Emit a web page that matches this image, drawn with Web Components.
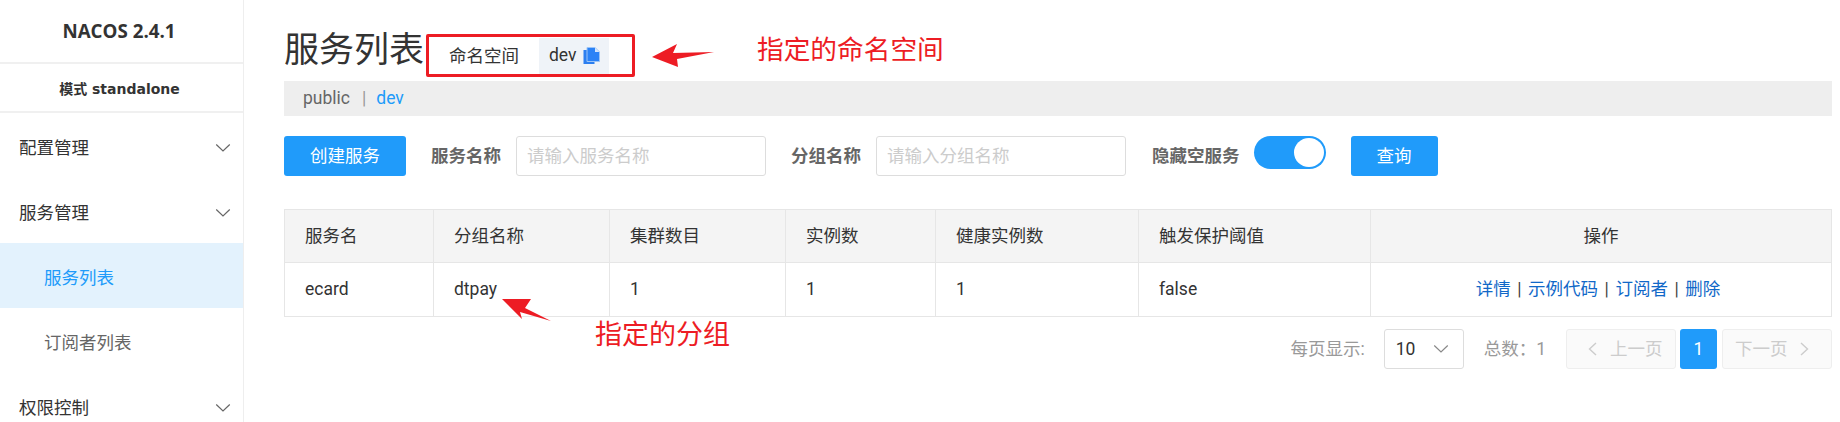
<!DOCTYPE html>
<html lang="zh">
<head>
<meta charset="utf-8">
<title>Nacos</title>
<style>
html,body{margin:0;padding:0;height:422px;overflow:hidden;background:#fff}
body{font:17.5px/1.2 Roboto,"Noto Sans CJK SC",sans-serif;color:#333}
</style>
</head>
<body>
<nacos-app>
  <nacos-sidebar slot="side" version="NACOS 2.4.1" mode="模式 standalone">
    <nav-item group label="配置管理"></nav-item>
    <nav-item group label="服务管理"></nav-item>
    <nav-item active label="服务列表"></nav-item>
    <nav-item label="订阅者列表"></nav-item>
    <nav-item group label="权限控制"></nav-item>
  </nacos-sidebar>
  <service-page></service-page>
</nacos-app>
<script>
const chevron = d => `<svg width="16" height="10" viewBox="0 0 16 10" fill="none" stroke="currentColor" stroke-width="1.2"><path d="${d}"/></svg>`;
customElements.define('nacos-app', class extends HTMLElement{
  constructor(){super();this.attachShadow({mode:'open'}).innerHTML=`<style>
  :host{display:flex;height:422px;overflow:hidden;position:relative}
  .main{flex:1;min-width:0}
  </style><slot name="side"></slot><div class="main"><slot></slot></div>`;}
});
customElements.define('nacos-sidebar', class extends HTMLElement{
  constructor(){super();this.attachShadow({mode:'open'});}
  connectedCallback(){
    this.shadowRoot.innerHTML=`<style>
    :host{display:block;width:244px;box-sizing:border-box;border-right:1px solid #eee;flex:none;height:422px;overflow:hidden}
    .v{height:60px;padding:0 5px 2px 0;border-bottom:2px solid #f0f0f0;display:flex;align-items:center;justify-content:center;font:700 18.75px "Open Sans","Noto Sans CJK SC",sans-serif;color:#333}
    .m{height:47px;padding-right:4px;border-bottom:2px solid #f0f0f0;display:flex;align-items:center;justify-content:center;font:700 14px "DejaVu Sans","Noto Sans CJK SC",sans-serif;color:#333}
    </style><div class="v">${this.getAttribute('version')}</div><div class="m">${this.getAttribute('mode')}</div><nav><slot></slot></nav>`;
  }
});
customElements.define('nav-item', class extends HTMLElement{
  constructor(){super();this.attachShadow({mode:'open'});}
  connectedCallback(){
    const g=this.hasAttribute('group');
    this.shadowRoot.innerHTML=`<style>
    :host{display:flex;align-items:center;justify-content:space-between;height:65px;box-sizing:border-box;padding:5px 12px 0 ${g?19:44}px;color:${g?'#333':'#666'}}
    :host([active]){background:#e3f2fd;color:#209bfa}
    svg{color:#666;display:block}
    </style><span>${this.getAttribute('label')}</span>${g?chevron('M1.25 1.5 L8 8 L14.75 1.5'):''}`;
  }
});
customElements.define('page-heading', class extends HTMLElement{
  constructor(){super();this.attachShadow({mode:'open'}).innerHTML=`<style>
  :host{display:flex;align-items:center;height:81px;box-sizing:border-box;padding-top:19px}
  h1{font:400 35px/1 Roboto,"Noto Sans CJK SC",sans-serif;margin:0;color:#333;width:142px;white-space:nowrap}
  .box{display:flex;align-items:stretch;width:209px;height:43.5px;box-sizing:border-box;border:3px solid #ed1c24;border-radius:2px;margin-top:11px;padding:1px 0 0 20px;color:#333}
  .ns{display:flex;align-items:center;width:90px}
  .tag{display:flex;align-items:center;gap:6px;width:70px;height:36px;background:#eff3f8;padding-left:10px;box-sizing:border-box;color:#333}
  svg{display:block;flex:none}
  </style><h1><slot></slot></h1><div class="box"><span class="ns">命名空间</span><span class="tag">dev<svg width="17" height="17" viewBox="0 0 17 17"><rect x="0.5" y="3" width="11" height="14" fill="#2c7ff0"/><path d="M4 .5H12L16.5 5V14.5H4Z" fill="#2b82f6" stroke="#9cc4f7"/><path d="M12 .5L16.5 5H12Z" fill="#d4e5fc"/></svg></span></div>`;}
});
customElements.define('ns-crumbs', class extends HTMLElement{
  constructor(){super();this.attachShadow({mode:'open'}).innerHTML=`<style>
  :host{display:flex;align-items:center;height:35px;background:#eee;padding-left:19px;color:#666;font-size:17.5px}
  i{font-style:normal;color:#999;margin:0 10px 0 12px}
  b{font-weight:400;color:#209bfa}
  </style><span>public</span><i>|</i><b>dev</b>`;}
});
customElements.define('nx-button', class extends HTMLElement{
  constructor(){super();this.attachShadow({mode:'open'}).innerHTML=`<style>
  :host{display:flex;align-items:center;justify-content:center;height:40px;background:#209bfa;color:#fff;border-radius:3px;flex:none;font-size:17.5px}
  </style><slot></slot>`;}
});
customElements.define('nx-field', class extends HTMLElement{
  constructor(){super();this.attachShadow({mode:'open'});}
  connectedCallback(){
    this.shadowRoot.innerHTML=`<style>
    :host{display:flex;align-items:center;gap:15px;flex:none}
    label{font-weight:700;color:#666;white-space:nowrap}
    .i{width:250px;height:40px;box-sizing:border-box;border:1px solid #ddd;border-radius:3px;padding-left:10px;display:flex;align-items:center;color:#ccc}
    </style><label>${this.getAttribute('label')}</label><div class="i">${this.getAttribute('placeholder')}</div>`;
  }
});
customElements.define('nx-switch', class extends HTMLElement{
  constructor(){super();this.attachShadow({mode:'open'}).innerHTML=`<style>
  :host{display:block;width:72px;height:33px;border-radius:17px;background:#209bfa;box-sizing:border-box;padding:2px 2px 2px 40px;flex:none}
  div{width:30px;height:29px;border-radius:50%;background:#fff}
  </style><div></div>`;}
});
customElements.define('filter-bar', class extends HTMLElement{
  constructor(){super();this.attachShadow({mode:'open'}).innerHTML=`<style>
  :host{display:flex;align-items:flex-start;margin-top:20px;height:40px}
  .btn1{width:122px;margin-right:25px}
  .f1{margin-right:25px}.f2{margin-right:26px}
  .l{font-weight:700;color:#666;line-height:40px;margin-right:14px;font-size:17.5px}
  .q{width:87px;margin-left:25px}
  </style>
  <nx-button class="btn1">创建服务</nx-button>
  <nx-field class="f1" label="服务名称" placeholder="请输入服务名称"></nx-field>
  <nx-field class="f2" label="分组名称" placeholder="请输入分组名称"></nx-field>
  <span class="l">隐藏空服务</span><nx-switch></nx-switch>
  <nx-button class="q">查询</nx-button>`;}
});
customElements.define('service-table', class extends HTMLElement{
  constructor(){super();this.attachShadow({mode:'open'}).innerHTML=`<style>
  :host{display:block;margin-top:33px}
  table{border-collapse:collapse;table-layout:fixed;width:1548px;color:#333;font-size:17.5px}
  th,td{border:1.5px solid #e6e6e6;padding:0 0 0 20px;text-align:left;font-weight:400;box-sizing:border-box}
  th{height:53px;background:#f4f4f4}
  td{height:54px}
  .c{text-align:center;padding:0}
  td.c{padding-right:6px}
  a{color:#1168c8;text-decoration:none}
  i{font-style:normal;margin:0 6.5px;color:#444}
  </style><table><colgroup><col style="width:149px"><col style="width:176px"><col style="width:176px"><col style="width:150px"><col style="width:203px"><col style="width:232px"><col></colgroup>
  <tr><th>服务名</th><th>分组名称</th><th>集群数目</th><th>实例数</th><th>健康实例数</th><th>触发保护阈值</th><th class="c">操作</th></tr>
  <tr><td>ecard</td><td>dtpay</td><td>1</td><td>1</td><td>1</td><td>false</td><td class="c"><a>详情</a><i>|</i><a>示例代码</a><i>|</i><a>订阅者</a><i>|</i><a>删除</a></td></tr>
  </table>`;}
});
customElements.define('nx-pagination', class extends HTMLElement{
  constructor(){super();this.attachShadow({mode:'open'}).innerHTML=`<style>
  :host{display:flex;justify-content:flex-end;align-items:center;height:40px;margin-top:12px;color:#999;font-size:17.5px}
  .sel{width:80px;height:40px;box-sizing:border-box;border:1px solid #ddd;border-radius:3px;display:flex;align-items:center;justify-content:space-between;padding:0 14px 0 11px;color:#333;margin:0 20px 0 19px;font-size:17.5px}
  .sel svg{color:#888}
  .tot{margin-right:20px}
  .pg{height:40px;width:110px;box-sizing:border-box;border:1px solid #eee;background:#fafafa;border-radius:3px;color:#ccc;display:flex;align-items:center}
  .prev{padding-left:21px;gap:13px}
  .next{padding-left:12px;gap:12.5px}
  .cur{width:37px;height:40px;background:#209bfa;color:#fff;border-radius:3px;display:flex;align-items:center;justify-content:center;margin:0 5px 0 4px}
  svg{display:block;flex:none}
  </style><span>每页显示:</span><div class="sel"><span>10</span>${chevron('M1.25 1.5 L8 8 L14.75 1.5')}</div><span class="tot">总数：1</span>
  <div class="pg prev"><svg width="9" height="14" viewBox="0 0 9 14" fill="none" stroke="currentColor" stroke-width="1.4"><path d="M8 1 L1.5 7 L8 13"/></svg><span>上一页</span></div><div class="cur">1</div><div class="pg next"><span>下一页</span><svg width="9" height="14" viewBox="0 0 9 14" fill="none" stroke="currentColor" stroke-width="1.4"><path d="M1 1 L7.5 7 L1 13"/></svg></div>`;}
});
customElements.define('red-annotations', class extends HTMLElement{
  constructor(){super();this.attachShadow({mode:'open'}).innerHTML=`<style>
  :host{position:absolute;left:0;top:0;width:0;height:0;color:#ed1c24;font:400 26.7px/1 Roboto,"Noto Sans CJK SC",sans-serif}
  span,svg{position:absolute;white-space:nowrap}
  svg{left:0;top:0;overflow:visible}
  .a{left:757px;top:37px}
  .b{left:595px;top:322px;font-size:27px}
  </style><svg width="1" height="1"><polygon fill="#ed1c24" points="652,57 677,44 673,53 714,52 677,59 678,67"/><polygon fill="#ed1c24" points="502,299 531,299 525,308 551,321 520,312 522,319"/></svg>
  <span class="a">指定的命名空间</span><span class="b">指定的分组</span>`;}
});
customElements.define('service-page', class extends HTMLElement{
  constructor(){super();this.attachShadow({mode:'open'}).innerHTML=`<style>
  :host{display:block;padding:0 8px 0 40px}
  </style><page-heading>服务列表</page-heading><ns-crumbs></ns-crumbs><filter-bar></filter-bar><service-table></service-table><nx-pagination></nx-pagination><red-annotations></red-annotations>`;}
});
</script>
</body>
</html>
